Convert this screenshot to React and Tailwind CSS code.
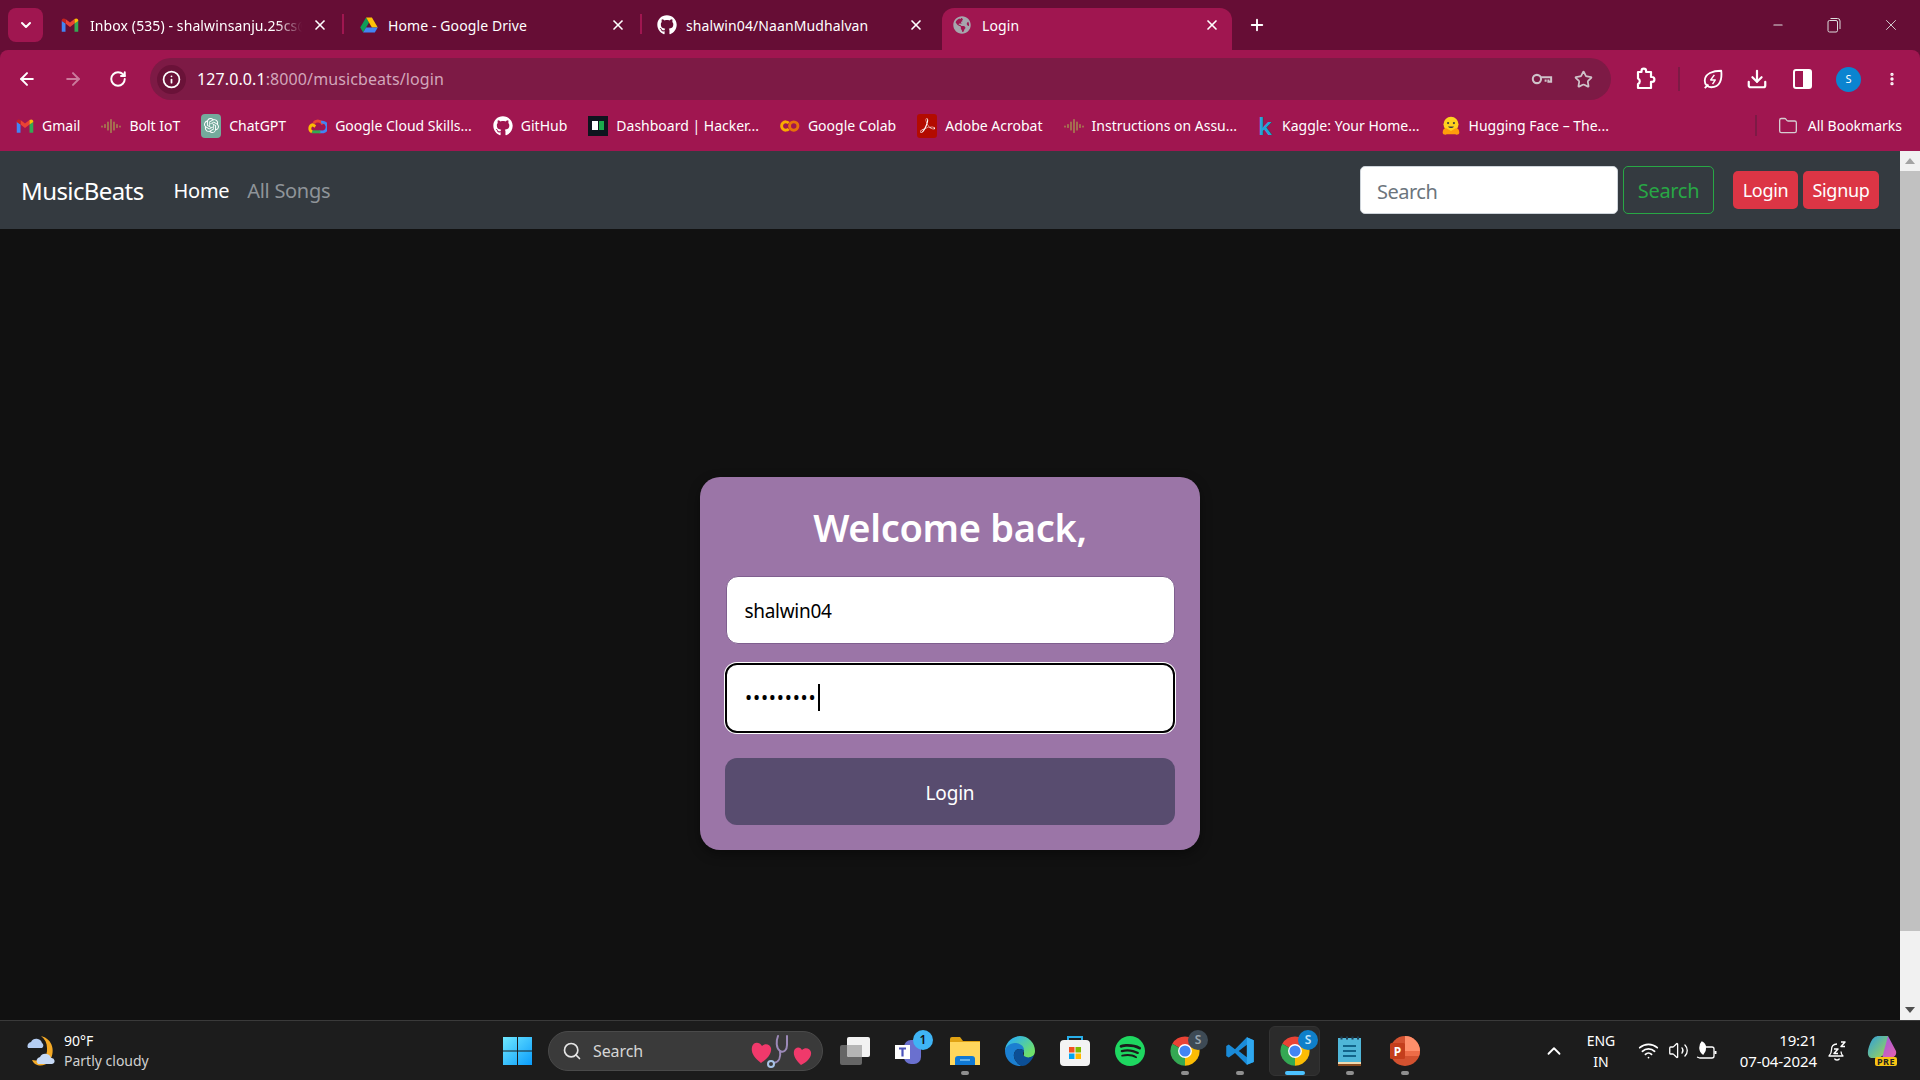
import { ArrowLeft, ArrowRight, RotateCw, Info, Star, Download, X, Plus, Minus, ChevronDown, ChevronUp, Search, Wifi, Volume2, Folder, EllipsisVertical } from "lucide-react";
import { FaGithub, FaGlobeAmericas } from "react-icons/fa";
import { SiOpenai, SiSpotify, SiAdobeacrobatreader } from "react-icons/si";

const Gmail = () => (
  <svg width="18" height="18" viewBox="0 0 24 24">
    <path d="M1 6v15h5V10z" fill="#4285F4" />
    <path d="M23 6v15h-5V10z" fill="#34A853" />
    <path d="M6 10l6 4.500 6-4.500V4l-6 4.500L6 4z" fill="#EA4335" />
    <path d="M18 4v6l5-3.500V6c0-3-3-3.500-5-2z" fill="#FBBC04" />
    <path d="M1 6.500 6 10V4C4 2.500 1 3 1 6z" fill="#C5221F" />
  </svg>
);

const Drive = () => (
  <svg width="20" height="20" viewBox="0 0 24 24">
    <path d="M8.500 3 1.500 15l3.500 6 7-12z" fill="#0F9D58" />
    <path d="M8.500 3h7l7 12h-7z" fill="#FFC107" />
    <path d="M5 21h14l3.500-6h-14z" fill="#4285F4" />
  </svg>
);

const Waves = () => (
  <svg width="20" height="20" viewBox="0 0 20 20" stroke="#a8a850" strokeWidth="1.200" strokeLinecap="round">
    <path d="M1 10v1M4 8.500v3M7 6v8M10 3.500v13M13 6v8M16 8.500v3M19 10v1" />
  </svg>
);

const ChatGpt = () => (
  <span className="w-5 h-6 rounded-[4px] bg-[#74aa9c] flex items-center justify-center text-white">
    <SiOpenai size={15} />
  </span>
);

const GCloud = () => (
  <svg width="20" height="20" viewBox="0 0 24 24" fill="none" strokeWidth="3.500">
    <path d="M8 8.500A6.500 6.500 0 0 1 19 10" stroke="#EA4335" />
    <path d="M17 7.500a5 5 0 0 1 2.500 11.500H15" stroke="#4285F4" />
    <path d="M16 19H6" stroke="#34A853" />
    <path d="M6 19A4.500 4.500 0 0 1 7 10.500l3 2" stroke="#FBBC04" />
  </svg>
);

const HackerRank = () => (
  <span className="w-5 h-5 bg-[#0e141e] flex items-center justify-center gap-[1px]">
    <span className="w-[6px] h-[9px] bg-white" />
    <span className="w-[5px] h-[9px] bg-[#1ba94c]" />
  </span>
);

const Colab = () => (
  <svg width="20" height="20" viewBox="0 0 24 24" fill="none" strokeWidth="3.500">
    <path d="M10.500 8.500a5 5 0 1 0 0 7" stroke="#F9AB00" />
    <circle cx="16.500" cy="12" r="5" stroke="#E8710A" />
  </svg>
);

const Acrobat = () => (
  <span className="w-5 h-6 rounded-[3px] bg-[#b30b00] flex items-center justify-center text-white">
    <SiAdobeacrobatreader size={15} />
  </span>
);

const Kaggle = () => (
  <span className="w-[10px] mr-[6px] text-[24px] leading-[20px] font-semibold text-[#20a4d8]">k</span>
);

const Hugging = () => (
  <svg width="20" height="20" viewBox="0 0 24 24">
    <circle cx="12" cy="10" r="9" fill="#FFD21E" />
    <path d="M2 20c0-5 3-6 5-5l5 3 5-3c2-1 5 0 5 5 0 2-3 3-5 2H7c-2 1-5 0-5-2z" fill="#FF9D0B" />
    <circle cx="8.500" cy="8.500" r="1.300" fill="#3a3b45" />
    <circle cx="15.500" cy="8.500" r="1.300" fill="#3a3b45" />
    <path d="M8.500 12.500c1.500 2.500 5.500 2.500 7 0z" fill="#3a3b45" />
  </svg>
);

const Windows = () => (
  <svg width="30" height="30" viewBox="0 0 30 30">
    <defs>
      <linearGradient id="win" x1="0" y1="0" x2="1" y2="1">
        <stop offset="0" stopColor="#6fe8ff" />
        <stop offset="1" stopColor="#0a9cfb" />
      </linearGradient>
    </defs>
    <path d="M0 1h14v13.500H0zM15 1h14v13.500H15zM0 15.500h14V29H0zM15 15.500h14V29H15z" fill="url(#win)" />
  </svg>
);

const Weather = () => (
  <svg width="32" height="36" viewBox="0 0 32 36">
    <path d="M17 3c12 3 15 16 8 26-5 5-14 5-17-2 8 2 16-2 15-12 0-5-2-9-6-12z" fill="#f4a925" />
    <path d="M4 15a4 4 0 0 1 3-6 6 6 0 0 1 11 1 3 3 0 0 1 0 5z" fill="#b4cdf2" />
    <path d="M14 31a4 4 0 0 1 2-7 6 6 0 0 1 11 1 3 3 0 0 1 1 6z" fill="#c6d9f5" />
  </svg>
);

const Hearts = () => (
  <svg width="66" height="36" viewBox="0 0 66 36">
    <path d="M10 30C2 24 0 19 1 14c1-5 7-6 10-1 3-3 8-2 9 2 1 6-4 11-10 15z" fill="#f0396b" />
    <path d="M50 32c-5-5-8-9-7-14 1-4 6-5 8-1 3-3 8-2 9 2 1 5-4 10-10 13z" fill="#f0396b" />
    <path d="M27 3c-2 5-2 12 2 15 4 2 7-1 7-6V3M29 18c1 6-1 11-6 12" fill="none" stroke="#9c8ab8" strokeWidth="2" strokeLinecap="round" />
    <circle cx="20" cy="31" r="3" fill="none" stroke="#a8c4e8" strokeWidth="2" />
  </svg>
);

const TaskView = () => (
  <svg width="30" height="28" viewBox="0 0 30 28">
    <rect x="0" y="8" width="22" height="20" rx="2" fill="#666" />
    <rect x="7" y="0" width="23" height="20" rx="2" fill="#f2f2f2" />
    <path d="M7 8h15v12H9a2 2 0 0 1-2-2z" fill="#b5b5b5" />
  </svg>
);

const Teams = () => (
  <svg width="30" height="30" viewBox="0 0 30 30">
    <rect x="9" y="4" width="17" height="24" rx="7" fill="#6a70cf" />
    <rect x="0" y="9" width="15" height="14" fill="#fff" />
    <path d="M4 12.500h7M7.500 12.500v8" stroke="#4b53bc" strokeWidth="2.200" />
  </svg>
);

const Explorer = () => (
  <svg width="30" height="28" viewBox="0 0 30 28">
    <path d="M0 2a2 2 0 0 1 2-2h8l3 4h17v24H0z" fill="#e0a213" />
    <path d="M0 5h30v23H0z" fill="#ffd65c" />
    <path d="M5 28v-6a3 3 0 0 1 3-3h14a3 3 0 0 1 3 3v6z" fill="#0f78d4" />
    <path d="M10 23h10" stroke="#7fc4f5" strokeWidth="1.500" />
  </svg>
);

const Edge = () => (
  <svg width="30" height="30" viewBox="0 0 30 30">
    <defs>
      <linearGradient id="edge1" x1="0" y1="0" x2="1" y2="0.800">
        <stop offset="0.200" stopColor="#2fb4ea" />
        <stop offset="0.900" stopColor="#6fe06a" />
      </linearGradient>
    </defs>
    <path d="M15 0a15 15 0 0 1 15 15c0 5-4 7-8 7-5 0-3-3-3-5 0-4-6-7-11-4C3 15 1 13 0 15 0 7 7 0 15 0z" fill="url(#edge1)" />
    <path d="M0 15c0-4 5-8 10-8 3 0 9 2 9 7-4-2-9-1-10 4-1 5 3 10 8 12-9 1-17-6-17-15z" fill="#1b7fd1" />
    <path d="M9 18c1-5 6-6 10-4 0 2-2 4 0 6 3 2 7 2 10-1-2 6-7 11-12 11-5-2-9-7-8-12z" fill="#0c4f96" />
  </svg>
);

const Store = () => (
  <svg width="30" height="30" viewBox="0 0 30 30">
    <path d="M8 6V1h14v5" fill="none" stroke="#28afea" strokeWidth="2" />
    <rect x="0" y="4" width="30" height="26" rx="4" fill="#f3f3f3" />
    <path d="M9 11h5.500v5.500H9z" fill="#f25022" />
    <path d="M15.500 11H21v5.500h-5.500z" fill="#7fba00" />
    <path d="M9 17.500h5.500V23H9z" fill="#00a4ef" />
    <path d="M15.500 17.500H21V23h-5.500z" fill="#ffb900" />
  </svg>
);

const Chrome = () => (
  <svg width="32" height="32" viewBox="0 0 24 24">
    <path d="M2.500 6.500a11 11 0 0 1 19 0L12 12z" fill="#EA4335" />
    <path d="M2.500 6.500A11 11 0 0 0 12 23l0-11z" fill="#34A853" />
    <path d="M21.500 6.500A11 11 0 0 1 12 23l0-11z" fill="#FBBC04" />
    <circle cx="12" cy="12" r="5.200" fill="#fff" />
    <circle cx="12" cy="12" r="4.200" fill="#4285F4" />
  </svg>
);

const VsCode = () => (
  <svg width="30" height="30" viewBox="0 0 24 24">
    <path d="M17.500 1 8 10.500 3 6.800 1 8v8l2 1.200L8 13.500l9.500 9.500 5.500-2.300V3.300zM17.500 7v10l-6.500-5z" fill="#1a8bd8" fillRule="evenodd" />
    <path d="M17.500 1 23 3.300v17.400L17.500 23z" fill="#2fa8f0" />
  </svg>
);

const Notepad = () => (
  <svg width="23" height="30" viewBox="0 0 23 30">
    <rect x="0" y="2" width="23" height="25" fill="#4fb6d8" />
    <path d="M0 26h23v4H0z" fill="#8a4b1f" />
    <path d="M0 26h23v2H0z" fill="#f0d9b0" />
    <path d="M2.500 2h2M8 2h2M13.500 2h2M19 2h2" stroke="#1d3f55" strokeWidth="3" />
    <path d="M5 10h13M5 15h13M5 20h13" stroke="#12648a" strokeWidth="2.200" />
  </svg>
);

const PowerPoint = () => (
  <svg width="30" height="30" viewBox="0 0 30 30">
    <circle cx="15" cy="15" r="15" fill="#d35230" />
    <path d="M15 0a15 15 0 0 1 15 15H15z" fill="#ff8f6b" />
    <path d="M15 15h15a15 15 0 0 1-1 5H15z" fill="#ed6c47" />
    <rect x="0" y="7" width="15" height="16" rx="1.500" fill="#c43e1c" />
    <text x="7.500" y="20" textAnchor="middle" fontSize="12" fontWeight="700" fill="#fff" fontFamily="Noto Sans">P</text>
  </svg>
);

const Copilot = () => (
  <div className="relative w-[30px] h-[30px]">
    <svg width="30" height="22" viewBox="0 0 30 22">
      <defs>
        <linearGradient id="cop1" x1="0" y1="0" x2="1" y2="1">
          <stop offset="0" stopColor="#2a9fe0" />
          <stop offset="1" stopColor="#a8d84a" />
        </linearGradient>
        <linearGradient id="cop2" x1="0" y1="0" x2="1" y2="1">
          <stop offset="0" stopColor="#8a5fe0" />
          <stop offset="1" stopColor="#e85fb0" />
        </linearGradient>
      </defs>
      <path d="M10 0h11l8 15c1 4-2 7-6 7h-7z" fill="url(#cop2)" />
      <path d="M12 0C7 0 5 3 3 8c-2 5-4 12 1 14 3 1 10 0 12-3 1-5 4-15 5-19z" fill="url(#cop1)" />
    </svg>
    <span className="absolute right-[0px] bottom-0 bg-[#f9c513] rounded-[2px] text-[#222] text-[9px] font-bold leading-[9px] px-[2px] tracking-[0.5px]">PRE</span>
  </div>
);

const KeyIcon = () => (
  <svg width="23" height="22" viewBox="0 0 24 24" fill="none" stroke="#cfc3c9" strokeWidth="2.200">
    <circle cx="7" cy="12" r="4.500" />
    <path d="M11.500 10h11v5h-3v-2.500M16.500 15v-2.500" />
  </svg>
);

const PuzzleIcon = () => (
  <svg width="24" height="24" viewBox="0 0 24 24" fill="none" stroke="#fff" strokeWidth="2.200" strokeLinejoin="round">
    <path d="M8.500 5V4a2.300 2.300 0 0 1 4.600 0v1H18v5h1a2.300 2.300 0 0 1 0 4.800h-1V21H5v-4a3 3 0 0 0 0-5.500V5z" />
  </svg>
);

const LeafBolt = () => (
  <svg width="22" height="24" viewBox="0 0 24 24" fill="none" stroke="#fff" strokeWidth="2" strokeLinejoin="round">
    <path d="M21 3c1 9-1 18-11 18-4 0-7-3-7-7C3 6 12 3 21 3zM3 22l4-4" />
    <path d="M13.500 7.500l-4 5.500h5l-3 4.500" strokeWidth="1.600" />
  </svg>
);

const SidePanel = () => (
  <svg width="19" height="20" viewBox="0 0 19 20">
    <rect x="1" y="1" width="17" height="18" rx="2" fill="none" stroke="#fff" strokeWidth="2" />
    <rect x="10" y="1" width="8" height="18" fill="#fff" />
  </svg>
);

const LeafBattery = () => (
  <svg width="22" height="22" viewBox="0 0 22 22" fill="none" stroke="#fff" strokeWidth="1.300">
    <path d="M11 7h6a2 2 0 0 1 2 2v7a2 2 0 0 1-2 2H5l-3-1" />
    <path d="M20.500 11v3" strokeWidth="2" />
    <path d="M7 2c4 2 5 7 1 12-4-3-4-9-1-12z" fill="#fff" />
  </svg>
);

const BellSnooze = () => (
  <svg width="20" height="22" viewBox="0 0 20 22" fill="none" stroke="#fff" strokeWidth="1.300" strokeLinejoin="round">
    <path d="M10 4C5.500 4 4.500 7 4.500 10c0 3-1 4.500-2.500 6h14c-1-1-2-2.500-2-4.500M7.500 18.500c.5 2 4.500 2 5 0" />
    <path d="M7 9h4l-4 4.500h4M14 2h4l-4 4.500h4" strokeWidth="1.500" />
  </svg>
);

const RestoreIcon = () => (
  <svg width="14" height="16" viewBox="0 0 14 16" fill="none" stroke="#ddd" strokeWidth="1">
    <rect x="1" y="3.500" width="9.500" height="11.500" rx="1.500" />
    <path d="M3.500 1.500h7a2.500 2.500 0 0 1 2.500 2.500v8" />
  </svg>
);

const tabs = [
  { icon: <Gmail />, title: "Inbox (535) - shalwinsanju.25cs@", faded: true },
  { icon: <Drive />, title: "Home - Google Drive" },
  { icon: <FaGithub size={20} className="text-white" />, title: "shalwin04/NaanMudhalvan" },
];

const bookmarks = [
  { icon: <Gmail />, label: "Gmail" },
  { icon: <Waves />, label: "Bolt IoT" },
  { icon: <ChatGpt />, label: "ChatGPT" },
  { icon: <GCloud />, label: "Google Cloud Skills..." },
  { icon: <FaGithub size={20} className="text-white" />, label: "GitHub" },
  { icon: <HackerRank />, label: "Dashboard | Hacker..." },
  { icon: <Colab />, label: "Google Colab" },
  { icon: <Acrobat />, label: "Adobe Acrobat" },
  { icon: <Waves />, label: "Instructions on Assu..." },
  { icon: <Kaggle />, label: "Kaggle: Your Home..." },
  { icon: <Hugging />, label: "Hugging Face – The..." },
];

const taskbarApps = [
  { icon: <TaskView /> },
  { icon: <Teams />, badge: "1", badgeClass: "bg-[#3fb4f5] text-[#111]" },
  { icon: <Explorer />, dot: true },
  { icon: <Edge /> },
  { icon: <Store /> },
  { icon: <SiSpotify size={30} className="text-[#1ed760]" /> },
  { icon: <Chrome />, dot: true, badge: "S", badgeClass: "bg-[#3d4a55] text-[#9aa5ae]" },
  { icon: <VsCode />, dot: true },
  { icon: <Chrome />, active: true, badge: "S", badgeClass: "bg-[#0f7fc9] text-[#bfe3fa]" },
  { icon: <Notepad />, dot: true },
  { icon: <PowerPoint />, dot: true },
];

function TitleBar() {
  return (
    <div className="h-[50px] bg-[#660d35] flex items-end text-white relative">
      <div className="w-[35px] h-[34px] ml-2 mb-2 rounded-lg bg-[#a01650] flex items-center justify-center">
        <ChevronDown size={16} strokeWidth={3} />
      </div>
      {tabs.map((t, i) => (
        <div key={t.title} className={`${i === 0 ? "ml-[18px] w-[283px]" : i === 1 ? "w-[298px]" : "w-[301px]"} h-[42px] pb-[8px] flex items-center relative`}>
          <span className={`${i === 0 ? "w-[29px]" : "w-[29px] ml-[15px]"} shrink-0 flex`}>{t.icon}</span>
          <span className={`w-[212px] text-[14px] whitespace-nowrap overflow-hidden tracking-[0.1px] ${t.faded ? "[mask-image:linear-gradient(to_right,black_88%,transparent)]" : ""}`}>{t.title}</span>
          <X size={16} className={`absolute top-[9px] ${i === 2 ? "right-[19px]" : "right-[16px]"} text-white`} strokeWidth={2.500} />
          {i < 2 && <span className="absolute right-0 top-[6px] w-[2px] h-[20px] bg-[#a01650]" />}
        </div>
      ))}
      <div className="w-[290px] h-[42px] -ml-[1px] pb-[8px] bg-[#a01650] rounded-t-xl flex items-center pl-[11px] relative">
        <FaGlobeAmericas size={18} className="text-[#a6a6ad] mr-[11px]" />
        <span className="text-[14px] tracking-[0.1px]">Login</span>
        <X size={16} className="absolute right-[12px] top-[9px]" strokeWidth={2.500} />
      </div>
      <div className="ml-[16px] mb-[16px]">
        <Plus size={18} strokeWidth={2.500} />
      </div>
      <div className="ml-auto h-[50px] flex items-center">
        <span className="w-[56px] flex justify-center"><Minus size={14} className="text-[#ddd]" /></span>
        <span className="w-[56px] flex justify-center"><RestoreIcon /></span>
        <span className="w-[58px] flex justify-center"><X size={18} strokeWidth={1.200} className="text-[#ddd]" /></span>
      </div>
    </div>
  );
}

function Toolbar() {
  return (
    <div className="h-[58px] bg-[#a01650] rounded-t-lg flex items-center text-white">
      <div className="w-[50px] flex justify-center pl-[4px]"><ArrowLeft size={20} strokeWidth={2.400} /></div>
      <div className="w-[45px] flex justify-center"><ArrowRight size={20} strokeWidth={2.400} className="text-[#cb7b9c]" /></div>
      <div className="w-[46px] flex justify-center"><RotateCw size={18} strokeWidth={2.600} /></div>
      <div className="ml-[9px] w-[1461px] h-[42px] rounded-full bg-[#7d1a45] flex items-center pl-[7px] pr-[18px]">
        <span className="w-[29px] h-[29px] rounded-full bg-[#6a1238] flex items-center justify-center"><Info size={19} strokeWidth={2.200} /></span>
        <span className="ml-[11px] text-[16px] tracking-[0.1px]">
          127.0.0.1<span className="text-[#d2a6ba]">:8000/musicbeats/login</span>
        </span>
        <span className="ml-auto mr-[3px] flex"><KeyIcon /></span>
        <Star size={19} strokeWidth={2.200} className="ml-[18px] text-[#cfc3c9]" />
      </div>
      <div className="ml-[22px] w-[24px] flex justify-center"><PuzzleIcon /></div>
      <span className="ml-[21px] w-[2px] h-[24px] bg-[#7d1a45]" />
      <div className="ml-[21px] w-[24px] flex justify-center"><LeafBolt /></div>
      <div className="ml-[20px] w-[24px] flex justify-center"><Download size={22} strokeWidth={2.400} /></div>
      <div className="ml-[21px] w-[24px] flex justify-center"><SidePanel /></div>
      <span className="ml-[22px] w-[25px] h-[25px] rounded-full bg-[#0b84d0] flex items-center justify-center text-[11px]">S</span>
      <div className="ml-[23px] w-[16px] flex justify-center"><EllipsisVertical size={20} strokeWidth={3} /></div>
    </div>
  );
}

function BookmarksBar() {
  return (
    <div className="h-[43px] pb-[8px] bg-[#a01650] flex items-center pl-4 text-white text-[14px] whitespace-nowrap">
      {bookmarks.map((b) => (
        <div key={b.label} className="flex items-center gap-[8px] mr-[21px]">
          <span className="flex">{b.icon}</span>
          <span>{b.label}</span>
        </div>
      ))}
      <span className="ml-auto w-[2px] h-[21px] bg-[#7d1a45]" />
      <Folder size={20} strokeWidth={1.600} className="ml-[21px] text-[#d6cdd1]" />
      <span className="ml-[10px] mr-[18px]">All Bookmarks</span>
    </div>
  );
}

function Navbar() {
  return (
    <nav className="h-[78px] bg-[#343a40] flex items-center pl-[21px] pr-[21px] text-[20px]">
      <span className="mt-[2px] text-white text-[24px] tracking-[-0.6px]">MusicBeats</span>
      <span className="mt-[2px] ml-[30px] text-white tracking-[-0.3px]">Home</span>
      <span className="mt-[2px] ml-[18px] text-[#8f9499] tracking-[-0.3px]">All Songs</span>
      <input
        readOnly
        placeholder="Search"
        className="ml-auto w-[258px] h-[48px] pt-[2px] bg-white rounded-[5px] border border-[#ced4da] px-4 text-[20px] tracking-[-0.5px] placeholder:text-[#6c757d] outline-none"
      />
      <button className="ml-[5px] w-[91px] h-[48px] pt-[2px] rounded-[5px] border border-[#28a745] text-[#28a745] text-[20px] tracking-[-0.3px]">Search</button>
      <button className="ml-[19px] w-[65px] h-[38px] rounded-[5px] bg-[#dc3545] text-white text-[18px] tracking-[-0.3px]">Login</button>
      <button className="ml-[5px] w-[76px] h-[38px] rounded-[5px] bg-[#dc3545] text-white text-[18px] tracking-[-0.3px]">Signup</button>
    </nav>
  );
}

function LoginCard() {
  return (
    <form className="w-[500px] h-[373px] rounded-[20px] bg-[#9b75a7] px-[25px] shadow-[0_4px_12px_rgba(0,0,0,0.4)]">
      <h1 className="h-[99px] pt-[2px] flex items-center justify-center text-white text-[38px] font-semibold tracking-[-0.3px]">Welcome back,</h1>
      <input
        readOnly
        value="shalwin04"
        className="block w-[449px] mx-auto h-[68px] bg-white rounded-[12px] border border-[#7f5f8f] pl-[18px] pt-[2px] text-[19px] tracking-[-0.3px] text-black outline-none"
      />
      <div className="relative mt-[19px] h-[70px]">
        <input
          readOnly
          type="password"
          value="shalwin04"
          className="block w-full h-[70px] bg-white rounded-[12px] border-2 border-black shadow-[0_0_0_1px_#fff] pl-[18px] text-[19px] tracking-[0.8px] text-black outline-none"
        />
        <span className="absolute left-[93px] top-[21px] w-[2px] h-[27px] bg-black" />
      </div>
      <button type="button" className="block mt-[25px] pt-[3px] w-full h-[67px] rounded-[12px] bg-[#584c6f] text-white text-[19px] tracking-[-0.2px]">Login</button>
    </form>
  );
}

function Scrollbar() {
  return (
    <div className="w-5 bg-[#f1f1f1] flex flex-col items-center shrink-0">
      <div className="h-[20px] flex items-center">
        <span className="w-0 h-0 border-x-[5px] border-x-transparent border-b-[6px] border-b-[#a3a3a3]" />
      </div>
      <div className="w-full h-[760px] bg-[#c1c1c1]" />
      <div className="mt-auto h-[20px] flex items-center">
        <span className="w-0 h-0 border-x-[5px] border-x-transparent border-t-[6px] border-t-[#505050]" />
      </div>
    </div>
  );
}

function Taskbar() {
  return (
    <div className="h-[60px] bg-[#1c1c1c] border-t border-[#3a3a3a] flex items-center text-white relative">
      <div className="ml-[24px] w-[40px]"><Weather /></div>
      <div className="w-[439px] text-[14px] leading-[20px]">
        <div>90°F</div>
        <div className="text-[#d0d0d0]">Partly cloudy</div>
      </div>
      <span className="flex"><Windows /></span>
      <div className="ml-[15px] w-[275px] h-[40px] rounded-full bg-[#3a3a3a] border border-[#4a4a4a] flex items-center pl-[13px] pr-[5px]">
        <Search size={20} className="text-[#e5e5e5]" />
        <span className="ml-[11px] text-[16px] text-[#d6d6d6] tracking-[-0.1px]">Search</span>
        <span className="ml-auto"><Hearts /></span>
      </div>
      <div className="ml-[4px] flex">
        {taskbarApps.map((a, i) => (
          <div key={i} className="w-[55px] h-[50px] relative flex items-center justify-center">
            {a.active && <span className="absolute left-[2px] right-[2px] top-0 bottom-0 rounded-[6px] bg-[#2b2b2b] border border-[#333]" />}
            <span className="relative flex">{a.icon}</span>
            {a.badge && <span className={`absolute top-[4px] right-[4px] w-[20px] h-[20px] rounded-full flex items-center justify-center text-[12px] font-semibold ${a.badgeClass}`}>{a.badge}</span>}
            {a.dot && <span className="absolute bottom-[1px] w-[8px] h-[4px] rounded-full bg-[#8f8f8f]" />}
            {a.active && <span className="absolute bottom-[1px] w-[20px] h-[4px] rounded-full bg-[#4cc2ff]" />}
          </div>
        ))}
      </div>
      <ChevronUp size={22} strokeWidth={2} className="ml-[111px] text-white" />
      <div className="ml-[8px] w-[56px] text-center text-[14px] leading-[21px]">
        <div>ENG</div>
        <div>IN</div>
      </div>
      <Wifi size={21} className="ml-[9px]" />
      <Volume2 size={21} strokeWidth={1.500} className="ml-[9px]" />
      <span className="ml-[6px] flex"><LeafBattery /></span>
      <div className="ml-[15px] w-[85px] text-right text-[15px] leading-[21px] tracking-[-0.1px]">
        <div>19:21</div>
        <div>07-04-2024</div>
      </div>
      <span className="ml-[10px] flex"><BellSnooze /></span>
      <span className="ml-[20px] flex"><Copilot /></span>
    </div>
  );
}

export default function App() {
  return (
    <div className="h-screen w-full flex flex-col overflow-hidden font-['Noto_Sans',sans-serif]">
      <div className="bg-[#660d35]">
        <TitleBar />
        <Toolbar />
        <BookmarksBar />
      </div>
      <div className="flex-1 flex min-h-0">
        <div className="flex-1 flex flex-col min-w-0">
          <Navbar />
          <main className="flex-1 bg-[#111] flex justify-center pt-[248px]">
            <LoginCard />
          </main>
        </div>
        <Scrollbar />
      </div>
      <Taskbar />
    </div>
  );
}
